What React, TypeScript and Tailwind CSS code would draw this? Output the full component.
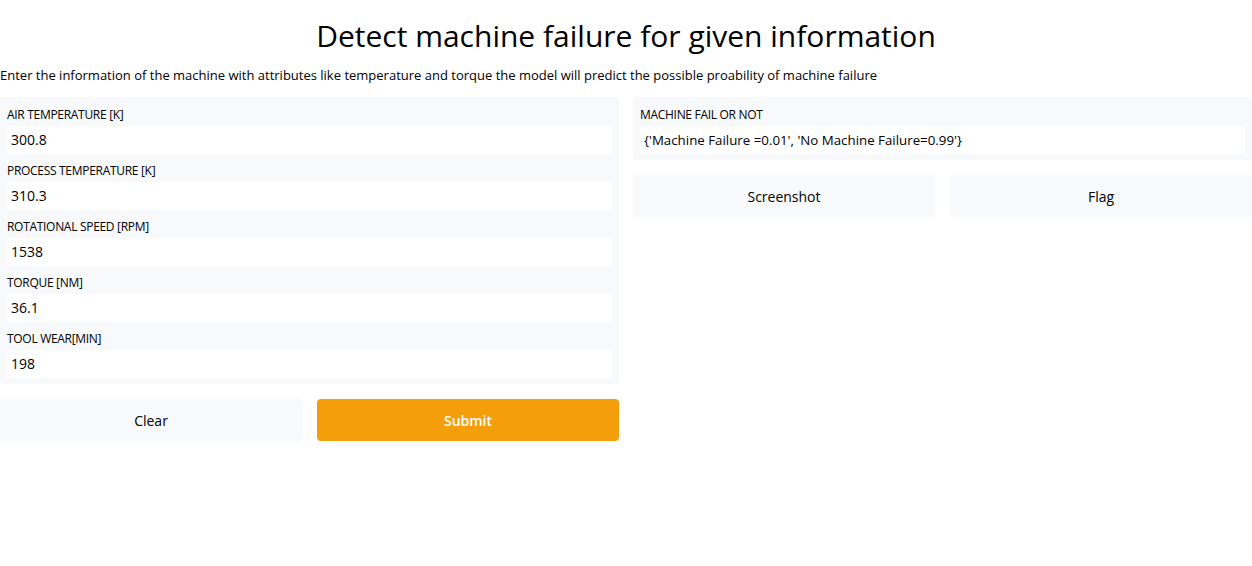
import React from "react";

const fields = [
  ["AIR TEMPERATURE [K]", "300.8"],
  ["PROCESS TEMPERATURE [K]", "310.3"],
  ["ROTATIONAL SPEED [RPM]", "1538"],
  ["TORQUE [NM]", "36.1"],
  ["TOOL WEAR[MIN]", "198"],
];

export default function App() {
  return (
    <div className="w-[1252px] h-[566px] bg-white text-black" style={{ fontFamily: '"Open Sans", "Noto Sans", sans-serif' }}>
      <h1 className="text-center text-[30px] leading-[40px] pt-[16px] font-normal">Detect machine failure for given information</h1>
      <p className="text-[13px] leading-[18px] mt-[10px]">
        Enter the information of the machine with attributes like temperature and torque the model will predict the possible proability of machine failure
      </p>
      <div className="flex gap-[14px] mt-[13px]">
        <div className="w-[619px] flex flex-col">
          <div className="bg-[#f8f9fb] rounded-[3px] px-[7px] pt-[7px] flex flex-col">
            {fields.map(([l, v]) => (
              <div key={l} className="flex flex-col">
                <div className="text-[12px] leading-[22px] h-[22px] tracking-[-0.3px]">{l}</div>
                <div className="bg-white h-[28px] rounded-[3px] px-[4px] text-[14px] leading-[28px] mb-[6px]">{v}</div>
              </div>
            ))}
          </div>
          <div className="flex gap-[15px] mt-[15px]">
            <div className="flex-1 h-[42px] bg-[#f8f9fb] rounded-[3px] flex items-center justify-center text-[14px] font-medium">Clear</div>
            <div className="flex-1 h-[42px] bg-[#f59e0b] rounded-[4px] flex items-center justify-center text-[14px] text-white font-semibold">Submit</div>
          </div>
        </div>
        <div className="w-[619px] flex flex-col">
          <div className="bg-[#f8f9fb] rounded-[3px] px-[7px] pt-[7px] pb-[6px]">
            <div className="text-[12px] leading-[22px] h-[22px] tracking-[-0.3px]">MACHINE FAIL OR NOT</div>
            <div className="bg-white h-[28px] rounded-[3px] px-[4px] text-[13.3px] leading-[28px]">{"{'Machine Failure =0.01', 'No Machine Failure=0.99'}"}</div>
          </div>
          <div className="flex gap-[15px] mt-[15px]">
            <div className="flex-1 h-[42px] bg-[#f8f9fb] rounded-[3px] flex items-center justify-center text-[14px] font-medium">Screenshot</div>
            <div className="flex-1 h-[42px] bg-[#f8f9fb] rounded-[3px] flex items-center justify-center text-[14px] font-medium">Flag</div>
          </div>
        </div>
      </div>
    </div>
  );
}
